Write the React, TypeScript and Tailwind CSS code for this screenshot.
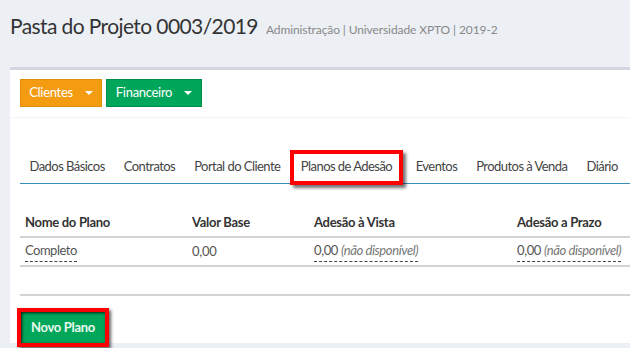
import React from "react";

const font = { fontFamily: '"Lato", "Open Sans", sans-serif' };

function Caret() {
  return <span className="inline-block w-0 h-0 border-x-[4px] border-t-[4px] border-x-transparent border-t-white ml-[12px]" />;
}

function Editable({ children }: { children: React.ReactNode }) {
  return <span className="border-b border-dashed border-[#444] pb-[1px]">{children}</span>;
}

const cell = "h-[29px] flex items-center px-[5px] border-b-2 border-[#d4d4d4]";

export default function App() {
  const tabs = ["Dados Básicos", "Contratos", "Portal do Cliente", "Planos de Adesão", "Eventos", "Produtos à Venda", "Diário"];
  return (
    <div className="w-[630px] h-[348px] bg-[#ecf0f5] overflow-hidden" style={font}>
      <div className="pt-[13px] pl-[10px] h-[39px] flex items-baseline whitespace-nowrap">
        <h1 className="text-[21px] leading-[26px] tracking-[-0.6px] text-[#333]">Pasta do Projeto 0003/2019</h1>
        <span className="ml-[8px] text-[12px] leading-[26px] tracking-[-0.1px] text-[#888]">Administração | Universidade XPTO | 2019-2</span>
      </div>
      <div className="mt-[28px] ml-[10px] w-[640px] bg-white border-t-[3px] border-[#d2d6de]">
        <div className="pt-[9px] pb-[10px] px-[10px] flex gap-[4px] border-b border-[#f4f4f4]">
          <button className="h-[28px] w-[82px] flex items-center justify-center bg-[#f39c12] border border-[#e08e0b] text-white text-[13px] tracking-[-0.3px]">
            Clientes<Caret />
          </button>
          <button className="h-[28px] w-[96px] flex items-center justify-center bg-[#00a65a] border border-[#008d4c] text-white text-[13px] tracking-[-0.3px]">
            Financeiro<Caret />
          </button>
        </div>
        <div className="pl-[10px] pt-[32px]">
          <ul className="flex border-b border-[#3c8dbc] h-[34px] whitespace-nowrap">
            {tabs.map((t, i) => (
              <li
                key={t}
                className={
                  "relative h-[33px] flex items-center text-[13px] tracking-[-0.55px] text-[#444] " +
                  (i === 3 ? "pl-[11px] pr-[14px]" : "px-[9.5px]")
                }
              >
                {t}
                {i === 3 && (
                  <span className="absolute left-0 right-[3px] top-0 -bottom-[2px] border-4 border-[#ff0000] shadow-[3px_3px_3px_rgba(0,0,0,0.55)]" />
                )}
              </li>
            ))}
          </ul>
          <div className="mt-[25px] grid grid-cols-[167px_122px_203px_1fr] text-[13px] text-[#333] whitespace-nowrap">
            <div className={cell + " font-bold tracking-[-0.3px]"}>Nome do Plano</div>
            <div className={cell + " font-bold tracking-[-0.3px]"}>Valor Base</div>
            <div className={cell + " font-bold tracking-[-0.3px]"}>Adesão à Vista</div>
            <div className={cell + " font-bold tracking-[-0.3px]"}>Adesão a Prazo</div>
            <div className={cell + " text-[#555] tracking-[-0.5px]"}><Editable>Completo</Editable></div>
            <div className={cell + " text-[#555] tracking-[-0.3px]"}>0,00</div>
            <div className={cell + " text-[#555] tracking-[-0.4px]"}><Editable>0,00 <i className="text-[#777]">(não disponível)</i></Editable></div>
            <div className={cell + " text-[#555] tracking-[-0.4px]"}><Editable>0,00 <i className="text-[#777]">(não disponível)</i></Editable></div>
          </div>
          <div className="mt-[27px] border-t-2 border-[#d4d4d4]" />
          <div className="pt-[16px] pl-[1px]">
            <button className="relative h-[31px] w-[84px] flex items-center justify-center bg-[#00a65a] text-[#eafaf0] text-[13px] tracking-[-0.3px] font-bold">
              Novo Plano
              <span className="absolute -inset-[4px] border-4 border-[#ff0000] shadow-[2px_2px_3px_rgba(0,0,0,0.6),inset_1px_1px_3px_rgba(0,0,0,0.8)]" />
            </button>
          </div>
        </div>
      </div>
    </div>
  );
}
